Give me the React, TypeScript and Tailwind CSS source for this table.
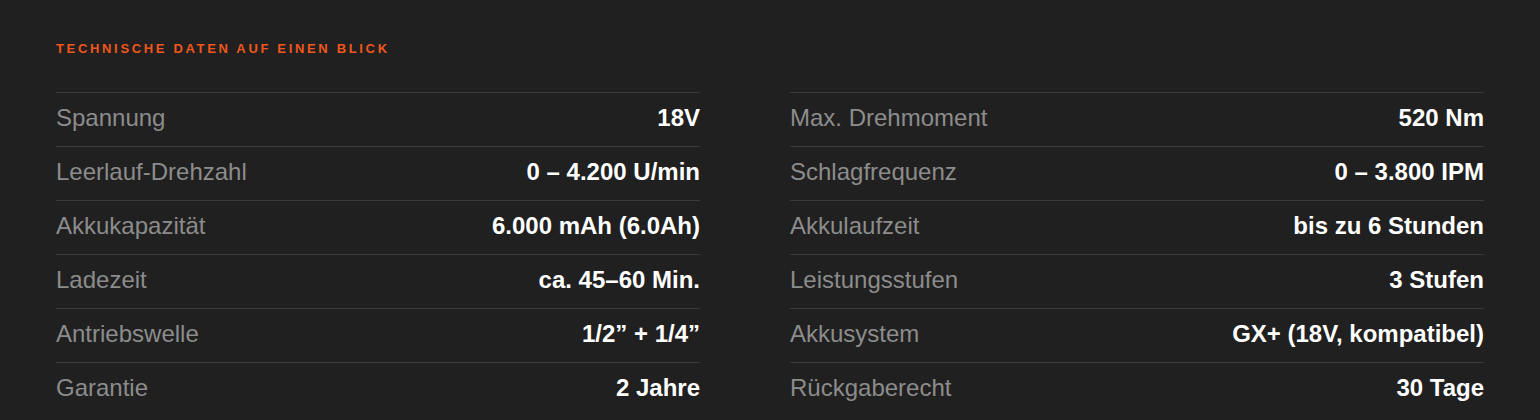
import React from "react";

const left = [
    ["Spannung", "18V"],
    ["Leerlauf-Drehzahl", "0 – 4.200 U/min"],
    ["Akkukapazität", "6.000 mAh (6.0Ah)"],
    ["Ladezeit", "ca. 45–60 Min."],
    ["Antriebswelle", "1/2” + 1/4”"],
    ["Garantie", "2 Jahre"],
];

const right = [
    ["Max. Drehmoment", "520 Nm"],
    ["Schlagfrequenz", "0 – 3.800 IPM"],
    ["Akkulaufzeit", "bis zu 6 Stunden"],
    ["Leistungsstufen", "3 Stufen"],
    ["Akkusystem", "GX+ (18V, kompatibel)"],
    ["Rückgaberecht", "30 Tage"],
];

const SpecList = ({ rows }: { rows: string[][] }) => {
    return (
        <div className="flex flex-col">
            {rows.map(([label, value]) => (
                <div key={label} className="flex items-center justify-between border-t border-[#3a3a3a] pt-[10px] pb-[14px]">
                    <span className="text-[24px] leading-[29px] text-[#8c8c8c]">{label}</span>
                    <span className="text-[24px] leading-[29px] font-bold text-white">{value}</span>
                </div>
            ))}
        </div>
    );
};

export default function App() {
    return (
        <div className="min-h-screen bg-[#202020] px-14 pt-[41px] pb-10" style={{ fontFamily: '"Liberation Sans", Arial, sans-serif' }}>
            <h2 className="text-[13px] leading-4 font-bold uppercase tracking-[0.205em] text-[#f0561d]">
                Technische Daten auf einen Blick
            </h2>

            {/* Specs grid */}
            <div className="mt-[35px] grid grid-cols-[644px_694px] gap-x-[90px]">
                <SpecList rows={left} />
                <SpecList rows={right} />
            </div>
        </div>
    );
}
